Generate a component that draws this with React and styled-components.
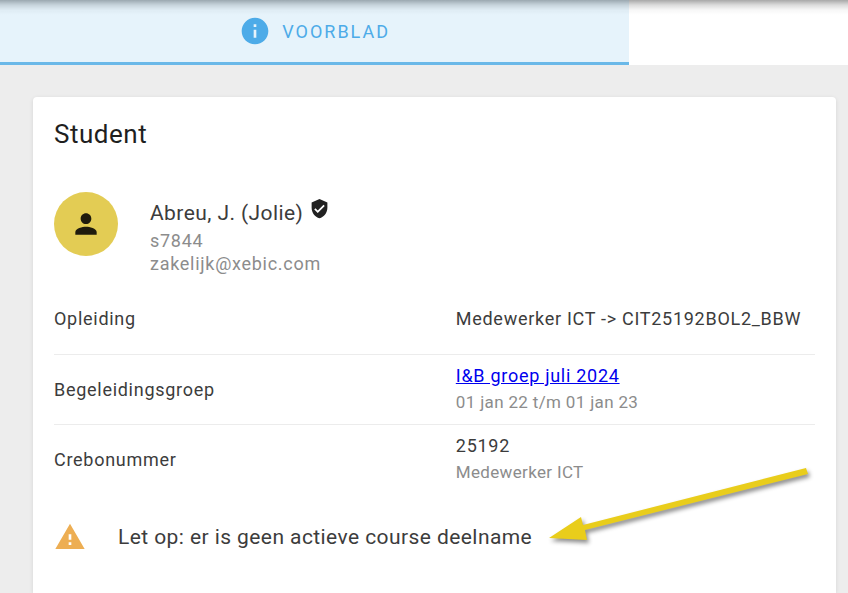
import React from "react"
import styled, { createGlobalStyle } from "styled-components"
import { MdInfo, MdPerson, MdVerifiedUser, MdWarning } from "react-icons/md"

const rows = [
  { label: "Opleiding", value: "Medewerker ICT -> CIT25192BOL2_BBW" },
  {
    label: "Begeleidingsgroep",
    value: "I&B groep juli 2024",
    href: "#groep",
    note: "01 jan 22 t/m 01 jan 23",
  },
  { label: "Crebonummer", value: "25192", note: "Medewerker ICT" },
]

export default function App() {
  return (
    <Page>
      <GlobalStyle />
      <TabBar>
        <Tab type="button">
          <MdInfo size={32} />
          Voorblad
        </Tab>
      </TabBar>
      <Card>
        <Title>Student</Title>
        <Profile>
          <Avatar>
            <MdPerson size={32} />
          </Avatar>
          <div>
            <Name>
              Abreu, J. (Jolie)
              <MdVerifiedUser size={21} />
            </Name>
            <Meta>s7844</Meta>
            <Meta>zakelijk@xebic.com</Meta>
          </div>
        </Profile>
        <Details>
          <tbody>
            {rows.map((row) => (
              <tr key={row.label}>
                <Label scope="row">{row.label}</Label>
                <Value>
                  {row.href ? <GroupLink href={row.href}>{row.value}</GroupLink> : row.value}
                  {row.note && <Note>{row.note}</Note>}
                </Value>
              </tr>
            ))}
          </tbody>
        </Details>
        <Alert>
          <MdWarning size={32} />
          <span>Let op: er is geen actieve course deelname</span>
          <Arrow viewBox="0 0 270 84" aria-hidden="true">
            <path d="M5 74 L37 53 L39 61 L262 4 L264 10 L41 66 L43 76 Z" />
          </Arrow>
        </Alert>
      </Card>
    </Page>
  )
}

const GlobalStyle = createGlobalStyle`
  * {
    box-sizing: border-box;
  }
  body {
    margin: 0;
    background: #ededed;
    color: #3c3c3c;
    font-family: Roboto, "Liberation Sans", sans-serif;
    font-size: 18px;
    letter-spacing: 0.04em;
  }
`

const Page = styled.div`
  display: flex;
  flex-direction: column;
  min-height: 100vh;
`

const TabBar = styled.nav`
  display: flex;
  height: 65px;
  background: linear-gradient(
    rgba(0, 0, 0, 0.34),
    rgba(0, 0, 0, 0.14) 5px,
    rgba(0, 0, 0, 0.03) 10px,
    transparent 15px
  ), #fff;
`

const Tab = styled.button`
  display: flex;
  align-items: center;
  justify-content: center;
  gap: 11px;
  width: 74.2%;
  padding: 0;
  border: 0;
  border-bottom: 3px solid #6ab8e8;
  background: rgba(77, 171, 229, 0.14);
  color: #4dabe8;
  font: inherit;
  letter-spacing: 2px;
  text-transform: uppercase;
`

const Card = styled.main`
  flex: 1;
  margin: 32px 12px 0 33px;
  padding: 21px;
  border-radius: 4px 4px 0 0;
  background: #fff;
  box-shadow: 0 1px 4px rgba(0, 0, 0, 0.1);
`

const Title = styled.h1`
  margin: 0;
  color: #1f1f1f;
  font-size: 26px;
  font-weight: 400;
  letter-spacing: 0.02em;
  line-height: 32px;
`

const Profile = styled.section`
  display: flex;
  gap: 32px;
  margin-top: 42px;
`

const Avatar = styled.div`
  display: flex;
  align-items: center;
  justify-content: center;
  width: 64px;
  height: 64px;
  border-radius: 50%;
  background: #e3cc54;
  color: #1f1b0d;
`

const Name = styled.h2`
  display: flex;
  gap: 6px;
  margin: 6px 0 0;
  font-size: 21px;
  font-weight: 400;
  letter-spacing: 0.02em;
  line-height: 31px;

  svg {
    color: #222;
  }
`

const Meta = styled.div`
  color: #8c8c8c;
  line-height: 23px;
`

const Details = styled.table`
  width: 100%;
  margin-top: 9px;
  border-collapse: collapse;
  table-layout: fixed;

  tr + tr {
    border-top: 1px solid #ececec;
  }
`

const Label = styled.th`
  width: 52.8%;
  height: 70px;
  padding: 0;
  font-weight: 400;
  text-align: left;
`

const Value = styled.td`
  padding: 0;
  line-height: 26px;
`

const GroupLink = styled.a`
  color: #0000ee;
`

const Note = styled.div`
  color: #8c8c8c;
  font-size: 17px;
  letter-spacing: 0.02em;
`

const Alert = styled.p`
  position: relative;
  display: flex;
  align-items: center;
  gap: 32px;
  margin: 27px 0 0;
  font-size: 21px;
  letter-spacing: 0.02em;
  line-height: 32px;

  > svg:first-child {
    color: #edae53;
  }
`

const Arrow = styled.svg`
  position: absolute;
  right: 1px;
  bottom: 5px;
  width: 270px;
  height: 84px;
  fill: #e9cd1b;
  filter: drop-shadow(2px 3px 2px rgba(0, 0, 0, 0.45));
`
